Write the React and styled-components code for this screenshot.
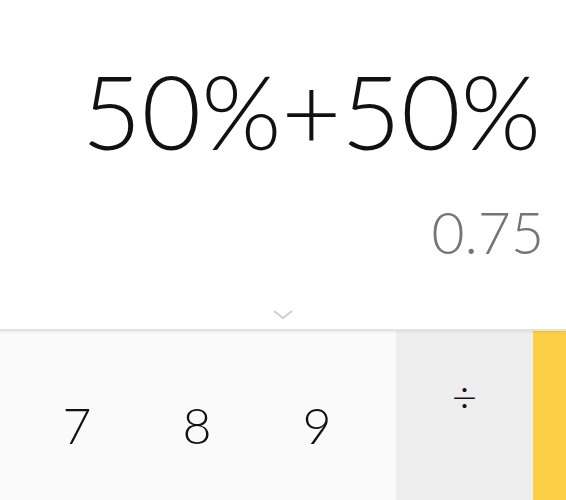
import React from 'react'
import styled, { createGlobalStyle } from 'styled-components'

const GlobalStyle = createGlobalStyle`
  html, body {
    margin: 0;
    padding: 0;
    background: #fafafa;
    overflow: hidden;
  }
  body {
    font-family: Lato, "Noto Sans", sans-serif;
  }
`

const Screen = styled.div`
  width: 566px;
  height: 500px;
  display: flex;
  flex-direction: column;
  overflow: hidden;
`

const Display = styled.div`
  height: 329px;
  flex-shrink: 0;
  background: #fff;
  display: flex;
  flex-direction: column;
  align-items: flex-end;
  border-bottom: 2px solid #e2e2e2;
  box-shadow: 0 1px 2px rgba(0, 0, 0, 0.08);
  position: relative;
  z-index: 1;
`

const Formula = styled.div`
  margin-top: 59px;
  margin-right: 25px;
  font-size: 103px;
  line-height: 103px;
  font-weight: 300;
  color: #111;
  white-space: nowrap;
`

const Result = styled.div`
  margin-top: 42px;
  margin-right: 22px;
  font-size: 57px;
  line-height: 57px;
  font-weight: 300;
  color: #757575;
`

const Handle = styled.div`
  align-self: stretch;
  display: flex;
  justify-content: center;
  margin-top: 48px;
`

const Pad = styled.div`
  flex: 1;
  display: flex;
`

const Digits = styled.div`
  width: 396px;
  background: #fafafa;
  display: grid;
  grid-template-columns: repeat(3, 120px);
  grid-auto-rows: 148px;
  padding: 20px 0 0 17px;
  box-sizing: border-box;
`

const Ops = styled.div`
  width: 137px;
  background: #eeeeee;
  display: grid;
  grid-auto-rows: 130px;
  box-sizing: border-box;
`

const Advanced = styled.div`
  flex: 1;
  background: #fccf47;
`

const Key = styled.div`
  display: flex;
  align-items: center;
  justify-content: center;
  font-size: ${p => (p.$op ? '44px' : '50px')};
  font-weight: 300;
  color: #111;
`

const digits = ['7', '8', '9', '4', '5', '6', '1', '2', '3', '.', '0', '=']
const ops = ['÷', '×', '−', '+']

function Chevron () {
  return (
    <svg width='22' height='12' viewBox='0 0 22 12'>
      <polyline points='2,2 11,9 20,2' fill='none' stroke='#cfcfcf' strokeWidth='2' />
    </svg>
  )
}

export default function App () {
  return (
    <Screen>
      <GlobalStyle />
      <Display>
        <Formula>50%+50%</Formula>
        <Result>0.75</Result>
        <Handle>
          <Chevron />
        </Handle>
      </Display>
      <Pad>
        <Digits>
          {digits.map(d => (
            <Key key={d}>{d}</Key>
          ))}
        </Digits>
        <Ops>
          {ops.map(o => (
            <Key key={o} $op>{o}</Key>
          ))}
        </Ops>
        <Advanced />
      </Pad>
    </Screen>
  )
}
